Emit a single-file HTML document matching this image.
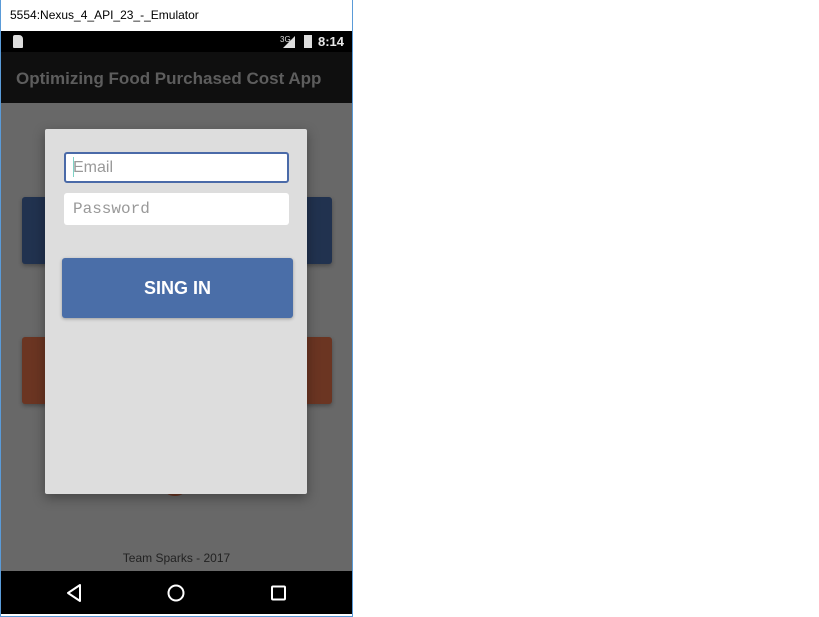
<!DOCTYPE html>
<html><head><style>
*{margin:0;padding:0;box-sizing:border-box}
body{width:819px;height:617px;background:#fff;position:relative;overflow:hidden;font-family:"Liberation Sans",sans-serif}
.a{position:absolute}
</style></head><body>
<div class="a" style="left:0;top:0;width:353px;height:617px;border:1px solid #5a9bd8;border-top:none;background:#fff"></div>
<div class="a" style="left:10px;top:8px;font-size:12px;color:#000">5554:Nexus_4_API_23_-_Emulator</div>
<div class="a" style="left:1px;top:31px;width:351px;height:21px;background:#000"></div>
<div class="a" style="left:13px;top:35px;width:10px;height:13px;background:#ddd;border-radius:2px 4px 1px 1px"></div>
<div class="a" style="left:280px;top:35px;font-size:8px;color:#ddd">3G</div>
<div class="a" style="left:283px;top:36px;width:0;height:0;border-left:12px solid transparent;border-bottom:12px solid #ddd"></div>
<div class="a" style="left:304px;top:35px;width:8px;height:13px;background:#ddd"></div>
<div class="a" style="left:318px;top:34px;font-size:13px;font-weight:bold;color:#e8e8e8">8:14</div>
<div class="a" style="left:1px;top:52px;width:351px;height:51px;background:#0f0f0f"></div>
<div class="a" style="left:16px;top:69px;font-size:17px;font-weight:bold;color:#5d5d5d">Optimizing Food Purchased Cost App</div>
<div class="a" style="left:1px;top:103px;width:351px;height:468px;background:#686868"></div>
<div class="a" style="left:22px;top:197px;width:310px;height:67px;background:#21324f;border-radius:3px;box-shadow:0 2px 4px rgba(0,0,0,.3)"></div>
<div class="a" style="left:22px;top:337px;width:310px;height:67px;background:#6b3522;border-radius:3px;box-shadow:0 2px 4px rgba(0,0,0,.3)"></div>
<div class="a" style="left:163px;top:478px;width:24px;height:18px;background:#6b3522;border-radius:50%"></div>
<div class="a" style="left:45px;top:129px;width:262px;height:365px;background:#dddddd;border-radius:2px;box-shadow:0 4px 12px rgba(0,0,0,.35)"></div>
<div class="a" style="left:64px;top:152px;width:225px;height:31px;background:#fff;border:2px solid #4a6aa8;border-radius:3px"></div>
<div class="a" style="left:73px;top:157px;width:1px;height:20px;background:#7fd3c6"></div>
<div class="a" style="left:73px;top:159px;font-size:16px;color:#999">Email</div>
<div class="a" style="left:64px;top:193px;width:225px;height:32px;background:#fff;border-radius:3px"></div>
<div class="a" style="left:73px;top:200px;font-size:16px;color:#999;font-family:'Liberation Mono',monospace">Password</div>
<div class="a" style="left:62px;top:258px;width:231px;height:60px;background:#4a6ea8;border-radius:3px;box-shadow:0 1px 3px rgba(0,0,0,.3);color:#fff;font-weight:bold;font-size:18px;text-align:center;line-height:60px">SING IN</div>
<div class="a" style="left:0;top:551px;width:353px;text-align:center;font-size:12px;color:#222">Team Sparks - 2017</div>
<div class="a" style="left:1px;top:571px;width:351px;height:43px;background:#000"></div>
<svg class="a" style="left:60px;top:580px" width="240" height="26" viewBox="0 0 240 26">
<path d="M20 5 L8 13 L20 21 Z" fill="none" stroke="#fff" stroke-width="2" stroke-linejoin="round"/>
<circle cx="116" cy="13" r="7.5" fill="none" stroke="#fff" stroke-width="2"/>
<rect x="212" y="6.5" width="13" height="13" rx="1" fill="none" stroke="#fff" stroke-width="2"/>
</svg>
</body></html>
